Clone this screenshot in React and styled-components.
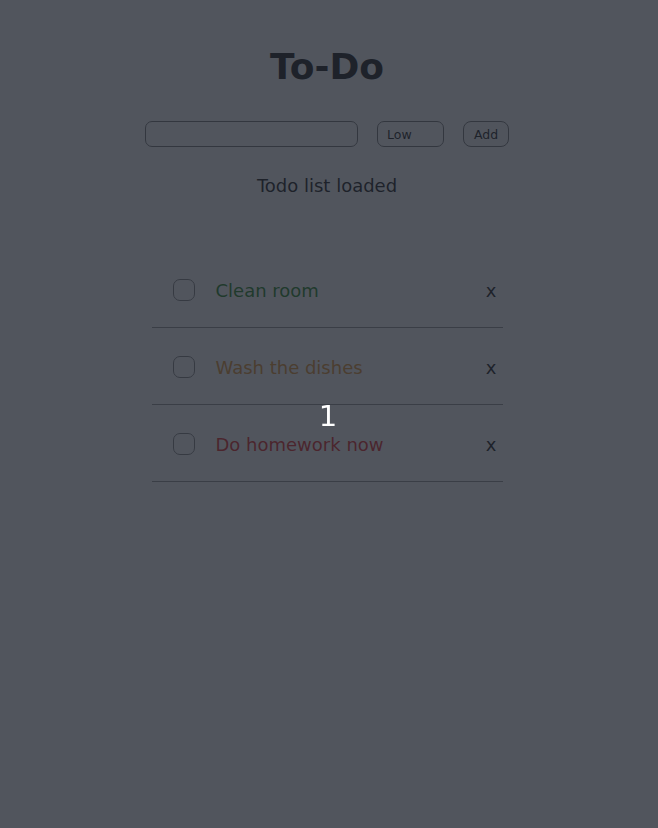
import React, { useState } from "react";
import styled, { createGlobalStyle } from "styled-components";

const GlobalStyle = createGlobalStyle`
  html, body {
    margin: 0;
    padding: 0;
    background: #ffffff;
    font-family: "DejaVu Sans", "Noto Sans", sans-serif;
    color: #000;
  }
`;

const Page = styled.div`
  padding: 46px 4px 0 0;
  text-align: center;
  min-height: 100vh;
  box-sizing: border-box;
`;

const Title = styled.h1`
  margin: 0 0 34px;
  font-size: 36px;
  font-weight: bold;
  line-height: normal;
`;

const Form = styled.form`
  display: flex;
  justify-content: center;
  align-items: center;
  gap: 19px;
  height: 26px;
  margin: 0 0 28px;
`;

const TextInput = styled.input`
  width: 213px;
  height: 26px;
  box-sizing: border-box;
  border: 1px solid #6b6b6b;
  border-radius: 7px;
  padding: 0 8px;
  font-family: inherit;
  font-size: 12.5px;
`;

const Select = styled.select`
  appearance: none;
  width: 67px;
  height: 26px;
  box-sizing: border-box;
  border: 1px solid #6b6b6b;
  border-radius: 7px;
  padding: 0 9px;
  background: #fff;
  font-family: inherit;
  font-size: 12.5px;
  color: #000;
  text-align: left;
`;

const AddButton = styled.button`
  height: 26px;
  width: 46px;
  box-sizing: border-box;
  border: 1px solid #6b6b6b;
  border-radius: 8px;
  background: #fafafa;
  font-family: inherit;
  font-size: 12.5px;
  color: #000;
  padding: 0;
`;

const Status = styled.p`
  margin: 0 0 55px;
  font-size: 18px;
  line-height: normal;
`;

const List = styled.ul`
  list-style: none;
  margin: 0 auto;
  padding: 0;
  width: 351px;
`;

const Row = styled.li`
  display: flex;
  align-items: center;
  height: 77px;
  box-sizing: border-box;
  border-bottom: 1px solid #8a8a8a;
  padding: 2px 6px 0 21px;
  text-align: left;
`;

const Check = styled.input`
  appearance: none;
  margin: 0 21px 0 0;
  width: 22px;
  height: 22px;
  border: 1px solid #7a7a7a;
  border-radius: 7px;
  background: #fff;
  flex-shrink: 0;
`;

const Label = styled.span`
  flex: 1;
  font-size: 18px;
  color: ${(p) => p.$color};
`;

const Remove = styled.span`
  font-size: 18px;
  color: #000;
`;

const Overlay = styled.div`
  position: fixed;
  inset: 0;
  padding: 3px 2px 0 0;
  background: rgba(38, 42, 52, 0.8);
  display: flex;
  align-items: center;
  justify-content: center;
  color: #ffffff;
  font-size: 29px;
`;

const priorityColors = {
  low: "#0a7a0a",
  medium: "#e08a20",
  high: "#e01010",
};

const todos = [
  { id: 1, text: "Clean room", priority: "low" },
  { id: 2, text: "Wash the dishes", priority: "medium" },
  { id: 3, text: "Do homework now", priority: "high" },
];

export default function App() {
  const [text, setText] = useState("");

  return (
    <>
      <GlobalStyle />
      <Page>
        <Title>To-Do</Title>
        <Form onSubmit={(e) => e.preventDefault()}>
          <TextInput value={text} onChange={(e) => setText(e.target.value)} />
          <Select defaultValue="low">
            <option value="low">Low</option>
            <option value="medium">Medium</option>
            <option value="high">High</option>
          </Select>
          <AddButton type="submit">Add</AddButton>
        </Form>
        <Status>Todo list loaded</Status>
        <List>
          {todos.map((t) => (
            <Row key={t.id}>
              <Check type="checkbox" />
              <Label $color={priorityColors[t.priority]}>{t.text}</Label>
              <Remove>x</Remove>
            </Row>
          ))}
        </List>
      </Page>
      <Overlay>1</Overlay>
    </>
  );
}
